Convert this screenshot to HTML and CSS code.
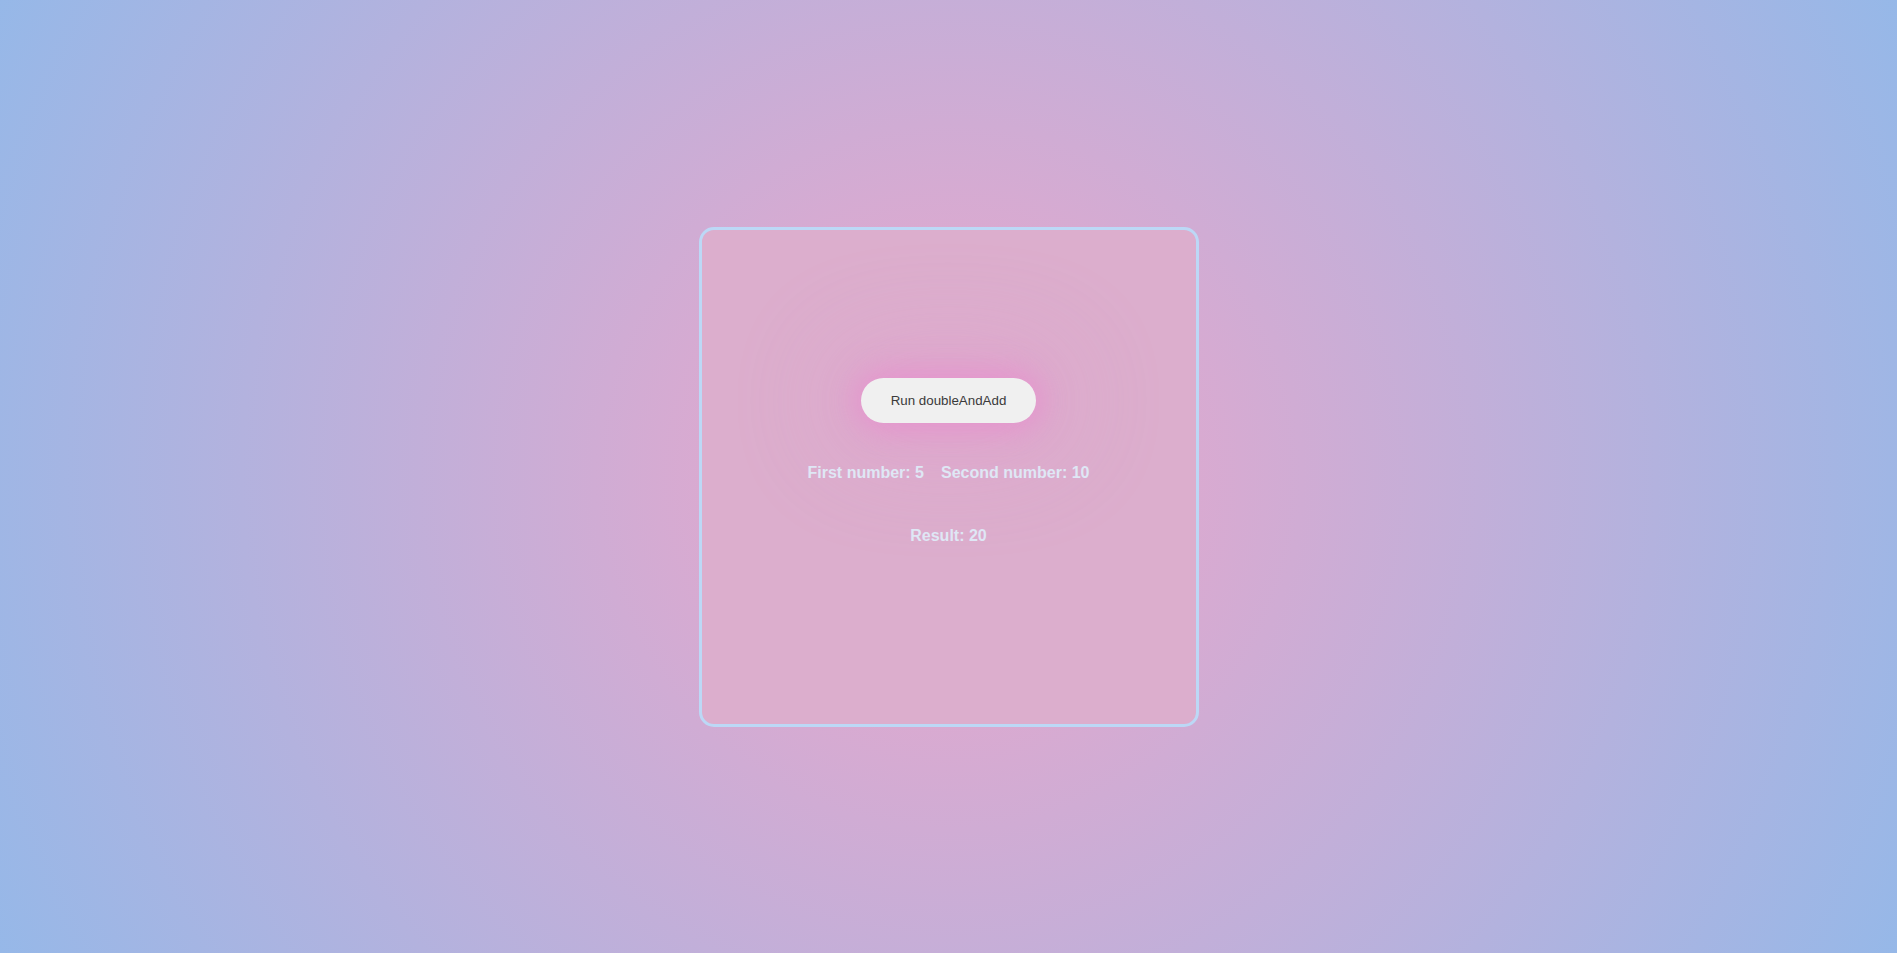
FILE: index.html
```html
<!DOCTYPE html>
<html lang="en">
<head>
<meta charset="utf-8">
<title>doubleAndAdd</title>
<link rel="stylesheet" href="styles.css">
</head>
<body>
  <main class="stage">
    <section class="card">
      <button class="run-btn" type="button">Run doubleAndAdd</button>
      <div class="numbers">
        <span class="num">First number: 5</span>
        <span class="num">Second number: 10</span>
      </div>
      <div class="result">Result: 20</div>
    </section>
  </main>
</body>
</html>
```

FILE: styles.css
```css
html, body {
  margin: 0;
  padding: 0;
  height: 100%;
}

body {
  font-family: "Liberation Sans", Arial, sans-serif;
  background: radial-gradient(circle at center, #eda6ca 0%, #96b8e8 100%);
  overflow: hidden;
}

.stage {
  height: 100vh;
  display: flex;
  align-items: center;
  justify-content: center;
}

.card {
  box-sizing: border-box;
  width: 500px;
  height: 500px;
  border: 3px solid #bcd8f6;
  border-radius: 15px;
  background: #dcaecd;
  display: flex;
  flex-direction: column;
  align-items: center;
  padding-top: 148px;
}

.run-btn {
  font-family: "Liberation Sans", Arial, sans-serif;
  font-size: 13.33px;
  line-height: 15px;
  color: #3a3a3a;
  background: #f0f0f0;
  border: none;
  border-radius: 999px;
  padding: 15px 30px;
  box-shadow: 0 0 30px 6px rgba(232, 140, 206, 0.75),
              0 0 100px 30px rgba(232, 150, 208, 0.3);
  cursor: pointer;
}

.numbers {
  margin-top: 41px;
  display: flex;
  gap: 17px;
  font-size: 16px;
  font-weight: bold;
  color: #dfe7f5;
}

.result {
  margin-top: 45px;
  font-size: 16px;
  font-weight: bold;
  color: #dfe7f5;
}
```
